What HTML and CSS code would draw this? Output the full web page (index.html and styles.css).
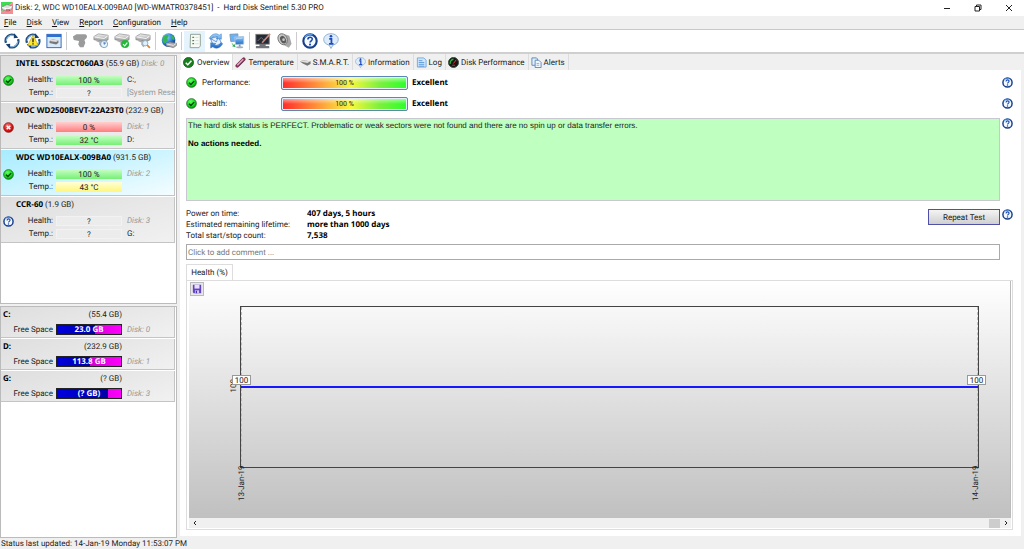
FILE: index.html
```html
<!DOCTYPE html>
<html lang="en">
<head>
    <meta charset="UTF-8">
    <meta name="viewport" content="width=device-width, initial-scale=1.0">
    <title>Hard Disk Sentinel</title>
    <link rel="stylesheet" href="styles.css">
</head>
<body>
    <!-- Shared icons -->
    <svg class="defs" aria-hidden="true">
        <defs>
            <radialGradient id="g-ok" cx=".4" cy=".3" r=".8"><stop offset="0" stop-color="#5dff5d"/><stop offset=".6" stop-color="#12d61c"/><stop offset="1" stop-color="#067a0c"/></radialGradient>
            <radialGradient id="g-bad" cx=".4" cy=".3" r=".8"><stop offset="0" stop-color="#ff7070"/><stop offset=".6" stop-color="#e81313"/><stop offset="1" stop-color="#8a0505"/></radialGradient>
            <linearGradient id="g-disk" x1="0" y1="0" x2="0" y2="1"><stop offset="0" stop-color="#f2f2f2"/><stop offset="1" stop-color="#8c8c8c"/></linearGradient>
            <linearGradient id="g-blue" x1="0" y1="0" x2="0" y2="1"><stop offset="0" stop-color="#9cd2ff"/><stop offset="1" stop-color="#1f66c4"/></linearGradient>
            <radialGradient id="g-globe" cx=".35" cy=".3" r=".8"><stop offset="0" stop-color="#8fdcff"/><stop offset=".6" stop-color="#2170cf"/><stop offset="1" stop-color="#0b2f7c"/></radialGradient>
        </defs>
        <symbol id="ok" viewBox="0 0 12 12">
            <circle cx="6" cy="6" r="5.3" fill="url(#g-ok)" stroke="#125c16" stroke-width=".8"/>
            <path d="M3.3 6.2l2 2 3.6-3.7" fill="none" stroke="#043a08" stroke-width="1.5"/>
        </symbol>
        <symbol id="bad" viewBox="0 0 12 12">
            <circle cx="6" cy="6" r="5.3" fill="url(#g-bad)" stroke="#7c1515" stroke-width=".8"/>
            <path d="M4 4l4 4M8 4l-4 4" stroke="#fff" stroke-width="1.5"/>
        </symbol>
        <symbol id="help" viewBox="0 0 12 12">
            <circle cx="6" cy="6" r="5" fill="#f5faff" stroke="#173f8c" stroke-width="1.6"/>
            <path d="M2 3.4A5 5 0 0 1 8 1.5" fill="none" stroke="#5c9be0" stroke-width="1"/>
            <path d="M4.4 4.9c0-2.4 3.5-2.2 3.3-.2C7.600 5.800 6 5.900 6 7.200" fill="none" stroke="#174ab0" stroke-width="1.2"/>
            <circle cx="6" cy="8.700" r=".8" fill="#174ab0"/>
        </symbol>
        <symbol id="refresh" viewBox="0 0 18 18">
            <path d="M2.200 11A7 7 0 0 1 12 2.600" fill="none" stroke="#24507f" stroke-width="2.600"/>
            <path d="M15.800 7A7 7 0 0 1 6 15.400" fill="none" stroke="#24507f" stroke-width="2.600"/>
            <path d="M2.500 9A6.500 6.500 0 0 1 11 2.800M15.500 9a6.500 6.500 0 0 1-8.500 6.200" fill="none" stroke="#8dbbe6" stroke-width="1.200"/>
            <path d="M11.500 .3l4.500 5-5 .7zM6.500 17.700L2 12.700l5-.7z" fill="#173f72"/>
        </symbol>
        <symbol id="drive" viewBox="0 0 18 18">
            <path d="M1 4l5-3 11 1.500v5l-4.500 2.500L1 7.500z" fill="url(#g-disk)" stroke="#808080" stroke-width=".7"/>
            <path d="M1.500 4.300l11 2L16.500 3.200" fill="none" stroke="#fff" stroke-width=".9"/>
            <path d="M4 8.500l4 1.500v3l2 2.500" fill="none" stroke="#aaa" stroke-width="1.800"/>
        </symbol>
        <symbol id="info" viewBox="0 0 18 18">
            <path d="M9 .8c4.600 0 8.200 2.800 8.200 6.500 0 3.200-2.600 5.600-6 6.300L9 17.400l-2.200-3.800C3.400 12.900.8 10.500.8 7.300.8 3.600 4.400.8 9 .8z" fill="#dcecfb" stroke="#86a8cf" stroke-width="1"/>
            <circle cx="9" cy="3.700" r="1.500" fill="#1d4bbf"/>
            <path d="M7 6.500h2.500v5.700M6.800 12.300h5" fill="none" stroke="#1d4bbf" stroke-width="2"/>
        </symbol>
    </svg>

    <header class="titlebar">
        <svg class="app-icon" viewBox="0 0 12 12"><path d="M0 0h12L0 10z" fill="#38e04f"/><path d="M12 0v12H0v-2z" fill="#f78c94"/><path d="M1 5l5-2.500 5 1.500v3L7 9.500 1 7.500z" fill="#ddd" stroke="#777" stroke-width=".6"/><path d="M1 5.500l6 1.500 4-2.500" fill="none" stroke="#fff"/><path d="M5 8h4" stroke="#c11" stroke-width="1"/></svg>
        <h1>Disk: 2, WDC WD10EALX-009BA0 [WD-WMATR0378451] &nbsp;-&nbsp; Hard Disk Sentinel 5.30 PRO</h1>
        <div class="window-buttons">
            <button aria-label="Minimize"><svg viewBox="0 0 8 8"><path d="M1 4.500h6"/></svg></button>
            <button aria-label="Restore"><svg viewBox="0 0 8 8"><path d="M1 2.500h4.500V7H1zM2.500 2.500V1H7v4.500H5.500"/></svg></button>
            <button aria-label="Close"><svg viewBox="0 0 8 8"><path d="M1 1l6 6M7 1L1 7"/></svg></button>
        </div>
    </header>

    <nav class="menu">
        <a href="#"><u>F</u>ile</a>
        <a href="#"><u>D</u>isk</a>
        <a href="#"><u>V</u>iew</a>
        <a href="#"><u>R</u>eport</a>
        <a href="#"><u>C</u>onfiguration</a>
        <a href="#"><u>H</u>elp</a>
    </nav>

    <div class="toolbar">
        <button aria-label="Refresh"><svg><use href="#refresh"/></svg></button>
        <button aria-label="Refresh problems"><svg viewBox="0 0 18 18"><use href="#refresh"/><path d="M9 2.500l6 11.500H3z" fill="#ffe72e" stroke="#b39a00" stroke-width=".7"/><path d="M9 6v4.500M9 11.500v1.500" stroke="#222" stroke-width="1.500"/></svg></button>
        <button aria-label="Disk panel"><svg viewBox="0 0 18 18"><rect x="1" y="1.500" width="16" height="15" fill="#d7e9fa" stroke="#2c5fae"/><path d="M1 3h16" stroke="#2f6fd0" stroke-width="3"/><path d="M4 9l3-2 7 1.300V11l-2.500 2L4 11.300z" fill="#777"/><path d="M4 9l3-2 7 1.300L11.500 10z" fill="#ddd"/></svg></button>
        <span class="sep"></span>
        <button aria-label="Disk menu"><svg viewBox="0 0 18 18"><path d="M1 4l4-2.500 10 0c2.500 1 2.500 4 0 5.500l-1 1 1 3-2 5H9l-2-3 1-4-6-1z" fill="#9b9b9b"/></svg></button>
        <button aria-label="Short self test"><svg viewBox="0 0 18 18"><use href="#drive"/><circle cx="12.500" cy="12.500" r="4" fill="#e9f4ff" stroke="#7a9cba"/><path d="M12.500 10v2.700l2-1.700" fill="none" stroke="#2464a8"/></svg></button>
        <button aria-label="Extended self test"><svg viewBox="0 0 18 18"><use href="#drive"/><circle cx="12.500" cy="12.500" r="4.500" fill="#21b937"/><path d="M10.200 12.600l1.800 1.800 3-3.500" fill="none" stroke="#fff" stroke-width="1.300"/></svg></button>
        <button aria-label="Surface test"><svg viewBox="0 0 18 18"><use href="#drive"/><circle cx="11.500" cy="11.500" r="3" fill="#dff1ff" stroke="#8fa9bd"/><path d="M13.700 13.700l3 3" stroke="#d38a32" stroke-width="2"/></svg></button>
        <span class="sep"></span>
        <button aria-label="Online"><svg viewBox="0 0 18 18"><circle cx="8.500" cy="8" r="7.700" fill="url(#g-globe)"/><path d="M3 4c3-3.500 7-2 5 .5s1 2.500-1 4.500-3 4-4.500 1.500S1.500 6 3 4zM11 2c3 1 5 4 4 6l-3-1z" fill="#37b556"/><path d="M6 12l4-2 7.500 1.500V14L14 16.500l-8-2z" fill="#aaa" stroke="#666" stroke-width=".6"/><path d="M6 12.200l8 1.800 3-2.300" fill="none" stroke="#eee"/></svg></button>
        <span class="sep"></span>
        <button class="pressed" aria-label="Text report"><svg viewBox="0 0 18 18"><path d="M4 1.500h11v13l-1.500 2H3.500z" fill="#f7faf5" stroke="#8b9c8c"/><path d="M6 5h2M6 8.500h2M6 12h2" stroke="#56845f" stroke-width="1.300"/><path d="M9.500 5H13M9.500 8.500H13M9.500 12H13" stroke="#d3dcd6"/></svg></button>
        <button aria-label="Send report"><svg viewBox="0 0 18 18"><path d="M2.500 6l9-2 4 8-9 3z" fill="#e6f2ff" stroke="#5b92d0"/><path d="M2.500 6l7 4 2-6" fill="none" stroke="#5b92d0"/><path d="M1.500 6c3-6 9-6 11-3.500l2.500-1.500v6l-6-1 2-1.500C8.500 3 5 3.500 4 7zM16.500 12c-3 6-9 6-11 3.500L3 17v-6l6 1-2 1.500c2.500 1.500 6 1 7-2.500z" fill="url(#g-blue)" stroke="#2468b5" stroke-width=".5"/></svg></button>
        <button aria-label="Network"><svg viewBox="0 0 18 18"><path d="M1 1.500l9-.5v8L2 9.500z" fill="#62b4ff" stroke="#7d95b2"/><path d="M6 4.500L16.500 4v8.500l-9 .5z" fill="url(#g-blue)" stroke="#a5bdd9"/><path d="M7.500 7c3-2.500 5 0 7.500-1.500" fill="none" stroke="#bfe4ff"/><path d="M12 13v2.500" stroke="#8497ab" stroke-width="2"/><ellipse cx="12" cy="16" rx="4" ry="1.200" fill="#9fb0c2"/><path d="M2.500 10.500l3 3 .5-1.500 1.500 4-4-1 1-1z" fill="#2faa55"/></svg></button>
        <span class="sep"></span>
        <button aria-label="Preferences"><svg viewBox="0 0 18 18"><rect x="1" y="1.500" width="15" height="11" fill="#242936" stroke="#777"/><path d="M1 16h15M5 13.500h7" stroke="#70737a" stroke-width="2.500"/><path d="M17 1L8 11" stroke="#c98d80" stroke-width="1.800"/><path d="M3 9l4-4 3 3" fill="none" stroke="#777"/></svg></button>
        <button aria-label="Sounds"><svg viewBox="0 0 18 18"><path d="M9 1l6 2 2.500 9-3 4.500-8-4z" fill="#a8a8a8"/><ellipse cx="7.500" cy="7" rx="5" ry="6.500" transform="rotate(-28 7.500 7)" fill="#c9c9c9" stroke="#777"/><ellipse cx="8" cy="7.500" rx="3" ry="4.500" transform="rotate(-28 8 7.500)" fill="#5b5b5b"/><circle cx="8.500" cy="7.500" r="1.500" fill="#c9c9c9"/></svg></button>
        <span class="sep"></span>
        <button aria-label="Help"><svg><use href="#help"/></svg></button>
        <button aria-label="About"><svg><use href="#info"/></svg></button>
    </div>

    <div class="main">
        <aside class="side">
            <section class="disk-list">
                <article class="disk">
                    <svg class="state"><use href="#ok"/></svg>
                    <h2><b>INTEL SSDSC2CT060A3</b> (55.9 GB) <i>Disk: 0</i></h2>
                    <div class="row"><span>Health:</span><div class="meter green">100 %</div><em class="letter">C:,</em></div>
                    <div class="row"><span>Temp.:</span><div class="meter">?</div><em class="volume">[System Rese</em></div>
                </article>
                <article class="disk">
                    <svg class="state"><use href="#bad"/></svg>
                    <h2><b>WDC WD2500BEVT-22A23T0</b> (232.9 GB)</h2>
                    <div class="row"><span>Health:</span><div class="meter red">0 %</div><i>Disk: 1</i></div>
                    <div class="row"><span>Temp.:</span><div class="meter green">32 °C</div><em class="letter">D:</em></div>
                </article>
                <article class="disk selected">
                    <svg class="state"><use href="#ok"/></svg>
                    <h2><b>WDC WD10EALX-009BA0</b> (931.5 GB)</h2>
                    <div class="row"><span>Health:</span><div class="meter green">100 %</div><i>Disk: 2</i></div>
                    <div class="row"><span>Temp.:</span><div class="meter yellow">43 °C</div></div>
                </article>
                <article class="disk">
                    <svg class="state"><use href="#help"/></svg>
                    <h2><b>CCR-60</b> (1.9 GB)</h2>
                    <div class="row"><span>Health:</span><div class="meter">?</div><i>Disk: 3</i></div>
                    <div class="row"><span>Temp.:</span><div class="meter">?</div><em class="letter">G:</em></div>
                </article>
            </section>

            <section class="drive-list">
                <article class="drive">
                    <h2><b>C:</b><span>(55.4 GB)</span></h2>
                    <div class="row"><span>Free Space</span><div class="space"><div class="used" style="width: 59%"></div><b>23.0 GB</b></div><i>Disk: 0</i></div>
                </article>
                <article class="drive">
                    <h2><b>D:</b><span>(232.9 GB)</span></h2>
                    <div class="row"><span>Free Space</span><div class="space"><div class="used" style="width: 51%"></div><b>113.8 GB</b></div><i>Disk: 1</i></div>
                </article>
                <article class="drive">
                    <h2><b>G:</b><span>(? GB)</span></h2>
                    <div class="row"><span>Free Space</span><div class="space"><div class="used" style="width: 80%"></div><b>(? GB)</b></div><i>Disk: 3</i></div>
                </article>
            </section>
        </aside>

        <main class="content">
            <nav class="tabs">
                <button class="active"><svg viewBox="0 0 12 12"><circle cx="6" cy="6" r="5.500" fill="#16801e" stroke="#0c4a12" stroke-width=".8"/><path d="M3 6.200l2.200 2.200 4-4.300" fill="none" stroke="#fff" stroke-width="1.700"/></svg>Overview</button>
                <button><svg viewBox="0 0 12 12"><path d="M9.500 2.500l-7 7" stroke="#813657" stroke-width="4" stroke-linecap="round"/><path d="M9 2.500L2.500 9" stroke="#e9a9c6" stroke-width="1.500"/><path d="M10 4l-6 6" stroke="#573c56" stroke-width=".8"/></svg>Temperature</button>
                <button><svg viewBox="0 0 12 12"><path d="M0 5l3-1.500 8.500 1v3L8 9.500 3 7z" fill="#777"/><path d="M0 5l3-1.500 8.500 1L8 6.500z" fill="#ddd"/></svg>S.M.A.R.T.</button>
                <button><svg><use href="#info"/></svg>Information</button>
                <button><svg viewBox="0 0 12 12"><path d="M1.500 1h7L11 3.500V11H1.500z" fill="#cfe5fb" stroke="#6ea8e2"/><path d="M3 4h4M3 6h6M3 8h6M3 10h6" stroke="#4286cd" stroke-width=".8"/></svg>Log</button>
                <button><svg viewBox="0 0 12 12"><circle cx="6" cy="6" r="5.500" fill="#161616" stroke="#3c483c"/><path d="M2.500 7.500A4 4 0 0 1 6 2.500" fill="none" stroke="#29b43a" stroke-width="1.500"/><path d="M6 7l3-4" stroke="#f33"/><path d="M4.500 9h3" stroke="#d33"/></svg>Disk Performance</button>
                <button><svg viewBox="0 0 12 12"><path d="M1 1h5l1 1v7H1z" fill="#e4effb" stroke="#5a83b8"/><path d="M4.500 3.500h4L11 6v5.500H4.500z" fill="#f4f9ff" stroke="#5a83b8"/><path d="M6 7h3M6 9h3" stroke="#8aa9d2"/></svg>Alerts</button>
            </nav>

            <div class="overview">
                <div class="rating">
                    <svg class="state"><use href="#ok"/></svg>
                    <span>Performance:</span>
                    <div class="rainbow">100 %</div>
                    <b>Excellent</b>
                    <button class="help" aria-label="Help"><svg><use href="#help"/></svg></button>
                </div>
                <div class="rating">
                    <svg class="state"><use href="#ok"/></svg>
                    <span>Health:</span>
                    <div class="rainbow">100 %</div>
                    <b>Excellent</b>
                    <button class="help" aria-label="Help"><svg><use href="#help"/></svg></button>
                </div>

                <div class="line status">
                    <div class="message">
                        <p>The hard disk status is PERFECT. Problematic or weak sectors were not found and there are no spin up or data transfer errors.</p>
                        <p><b>No actions needed.</b></p>
                    </div>
                    <button class="help" aria-label="Help"><svg><use href="#help"/></svg></button>
                </div>

                <div class="line summary">
                    <dl>
                        <dt>Power on time:</dt><dd>407 days, 5 hours</dd>
                        <dt>Estimated remaining lifetime:</dt><dd>more than 1000 days</dd>
                        <dt>Total start/stop count:</dt><dd>7,538</dd>
                    </dl>
                    <button class="repeat">Repeat Test</button>
                    <button class="help" aria-label="Help"><svg><use href="#help"/></svg></button>
                </div>

                <input class="comment" type="text" placeholder="Click to add comment ..." aria-label="Comment">

                <button class="chart-tab">Health (%)</button>
                <div class="chart-panel">
                    <div class="chart">
                        <button class="save" aria-label="Save"><svg viewBox="0 0 12 12"><path d="M1 1h10v10H2L1 10z" fill="#6442c4"/><path d="M3 1h6v4.500H3z" fill="#e6e0fa"/><path d="M3.500 7.500h5V11h-5z" fill="#cfc4f2"/><path d="M4.500 8h1.500v3H4.500z" fill="#4e2fae"/></svg></button>
                        <div class="plot">
                            <span class="axis-y">100</span>
                            <div class="series"></div>
                            <span class="point first">100</span>
                            <span class="point last">100</span>
                        </div>
                        <div class="axis-x"><span>13-Jan-19</span><span>14-Jan-19</span></div>
                    </div>
                    <div class="scroll">
                        <button aria-label="Scroll left"><svg viewBox="0 0 6 6"><path d="M4 1L2 3l2 2"/></svg></button>
                        <div class="thumb"></div>
                        <button aria-label="Scroll right"><svg viewBox="0 0 6 6"><path d="M2 1l2 2-2 2"/></svg></button>
                    </div>
                </div>
            </div>
        </main>
    </div>

    <footer class="statusbar">Status last updated: 14-Jan-19 Monday 11:53:07 PM</footer>
</body>
</html>
```
FILE: styles.css
```css
* {
    box-sizing: border-box;
}

body {
    display: flex;
    flex-direction: column;
    height: 100vh;
    margin: 0;
    background-color: #f0f0f0;
    font-family: Roboto, "Open Sans", sans-serif;
    font-size: 8px;
    line-height: 12px;
    text-rendering: geometricPrecision;
    color: #222;
}

h1, h2, p, dl, dd {
    margin: 0;
    font-size: inherit;
    font-weight: normal;
}

button {
    padding: 0;
    border: none;
    background: none;
    font: inherit;
    color: inherit;
    text-rendering: inherit;
}

svg {
    display: block;
    flex: none;
}

b, dd {
    font-family: "Noto Sans", "Open Sans", sans-serif;
    font-weight: bold;
    color: #000;
}

i {
    color: #999;
}

.defs {
    position: absolute;
    width: 0;
    height: 0;
}

/* Window frame */
.titlebar {
    display: flex;
    align-items: center;
    height: 16px;
    padding-left: 1px;
    gap: 2px;
    background-color: #fff;
}

.app-icon {
    width: 12px;
    height: 12px;
}

.window-buttons {
    display: flex;
    margin-left: auto;
}

.window-buttons button {
    display: flex;
    justify-content: center;
    width: 31px;
}

.window-buttons svg {
    width: 8px;
    height: 8px;
    fill: none;
    stroke: #222;
    stroke-width: 1;
}

.menu {
    display: flex;
    align-items: center;
    gap: 10px;
    height: 14px;
    padding-left: 4px;
    border-bottom: 1px solid #c8c8c8;
}

.menu a {
    color: #111;
    text-decoration: none;
}

.toolbar {
    display: flex;
    align-items: center;
    height: 24px;
    padding-left: 1px;
    background-color: #fff;
    border-bottom: 2px solid #cfcfcf;
}

.toolbar button {
    display: flex;
    align-items: center;
    justify-content: center;
    width: 21px;
    height: 21px;
}

.toolbar svg {
    width: 16px;
    height: 16px;
}

.toolbar .pressed {
    background-color: #e5f3fd;
}

.sep {
    width: 1px;
    height: 18px;
    margin: 0 2px;
    background-color: #ccc;
}

.main {
    display: flex;
    flex: 1;
    min-height: 0;
    gap: 3px;
}

/* Left panel */
.side {
    display: flex;
    flex-direction: column;
    gap: 2px;
    width: 177px;
    padding-top: 1px;
}

.disk-list, .drive-list {
    border: 1px solid #bbb;
    background-color: #fff;
}

.disk-list {
    height: 249px;
}

.drive-list {
    flex: 1;
}

.disk, .drive {
    position: relative;
    margin-right: 1px;
    border-right: 1px solid #c4c4c4;
    border-bottom: 1px solid #c4c4c4;
    background-image: linear-gradient(165deg, #dedede, #f1f1f1);
}

.disk {
    height: 46px;
    margin-bottom: 1px;
    padding-top: 2px;
}

.disk.selected {
    background-image: linear-gradient(165deg, #a6ecff, #f4fdff);
}

.disk h2 {
    padding-left: 15px;
    margin-bottom: 3px;
    white-space: nowrap;
}

.state {
    width: 11px;
    height: 11px;
}

.disk .state {
    position: absolute;
    left: 2px;
    top: 19px;
}

.row {
    display: grid;
    grid-template-columns: 52px 66px 1fr;
    column-gap: 3px;
    align-items: center;
    height: 13px;
    line-height: 13px;
    white-space: nowrap;
}

.row > span {
    text-align: right;
}

.row i, .row em {
    padding-left: 2px;
}

.row em {
    font-style: normal;
}

.row .volume {
    color: #999;
}

.meter {
    height: 10px;
    border: 1px solid #f2f2f2;
    background-color: #ececec;
    line-height: 9px;
    text-align: center;
}

.meter.green {
    border: none;
    background: linear-gradient(#ccffc8, #76f076);
    line-height: 11px;
}

.meter.red {
    border: none;
    background: linear-gradient(#ffd0d0, #ff7c7c);
    line-height: 11px;
}

.meter.yellow {
    border: none;
    background: linear-gradient(#ffffd8, #fff67a);
    line-height: 11px;
}

.drive {
    height: 31px;
    margin-bottom: 1px;
    padding-top: 2px;
}

.drive h2 {
    display: flex;
    justify-content: space-between;
    width: 121px;
    padding-left: 2px;
    margin-bottom: 2px;
}

.space {
    position: relative;
    height: 11px;
    border: 1px solid #222;
    background: linear-gradient(90deg, #a000a0, #f0f);
    line-height: 10px;
    text-align: center;
}

.space .used {
    height: 100%;
    background: linear-gradient(90deg, #0000e0, #0000a8);
}

.space b {
    position: absolute;
    inset: 0;
    color: #fff;
}

/* Tabs */
.content {
    display: flex;
    flex: 1;
    flex-direction: column;
    min-width: 0;
    padding: 0 3px 2px 0;
}

.tabs {
    display: flex;
    height: 16px;
    padding-left: 1px;
}

.tabs button {
    display: flex;
    align-items: center;
    gap: 2px;
    padding: 1px 3px 0 2px;
    border-right: 1px solid #ddd;
}

.tabs svg {
    width: 11px;
    height: 11px;
}

.tabs .active {
    gap: 3px;
    background-color: #fff;
}

.overview {
    display: flex;
    flex: 1;
    flex-direction: column;
    min-height: 0;
    padding: 2px 8px 6px 6px;
    background-color: #fff;
}

.rating {
    display: grid;
    grid-template-columns: 12px 75px 127px 1fr 11px;
    column-gap: 4px;
    align-items: center;
    height: 21px;
}

.help svg {
    width: 11px;
    height: 11px;
}

.rainbow {
    height: 14px;
    border: 1px solid #5d86b5;
    border-radius: 2px;
    background: linear-gradient(rgba(255, 255, 255, .6), rgba(255, 255, 255, 0) 50%), linear-gradient(90deg, #ff2a2a, #ff9a3c 30%, #f8f83c 55%, #7df03c 78%, #2aff2a);
    box-shadow: inset 0 0 0 1px #e4eefa;
    font-size: 7px;
    line-height: 12px;
    text-align: center;
}

.line {
    display: flex;
    align-items: flex-start;
    gap: 2px;
}

.status {
    margin-top: 4px;
}

.message {
    flex: 1;
    height: 83px;
    padding: 1px;
    border: 1px solid #c8c8d0;
    background-color: #bfffbf;
}

.message, .message b {
    font-family: "Liberation Sans", Arial, sans-serif;
}

.message p + p {
    margin-top: 6px;
}

.summary {
    height: 43px;
    padding-top: 7px;
}

.summary button {
    margin-top: 1px;
}

.summary dl {
    display: grid;
    flex: 1;
    grid-template-columns: 121px 1fr;
    line-height: 11px;
}

.repeat {
    width: 72px;
    height: 16px;
    padding-top: 1px;
    border: 1px solid #5050a8;
    background: linear-gradient(#f4f4f4, #cfcfcf);
}

.comment {
    height: 16px;
    margin-right: 13px;
    padding: 0 1px;
    border: 1px solid #aaa;
    font: inherit;
    text-rendering: inherit;
}

.comment::placeholder {
    color: #777;
}

/* Health chart */
.chart-tab {
    align-self: flex-start;
    width: 47px;
    height: 16px;
    margin-top: 4px;
    border: 1px solid #ddd;
    border-bottom: none;
}

.chart-panel {
    display: flex;
    flex: 1;
    flex-direction: column;
    padding: 0 1px 1px 2px;
    border: 1px solid #ddd;
}

.chart {
    display: flex;
    flex: 1;
    flex-direction: column;
    border-right: 1px solid #bbb;
    background: linear-gradient(#fff, #c0c0c0);
}

.save {
    width: 14px;
    height: 14px;
    margin: 1px;
    padding: 1px;
    border: 1px solid #bbb;
    background-color: #e8e8e8;
}

.plot {
    position: relative;
    flex: 1;
    margin: 9px 31px 0 51px;
    border: 1px solid #444;
}

.plot::before {
    content: "";
    position: absolute;
    inset: 0;
    border: dashed #bbb;
    border-width: 0 1px;
}

.series {
    position: absolute;
    left: 0;
    right: 0;
    top: 50%;
    margin-top: -1px;
    border-top: 2px solid #1818ff;
}

.point {
    position: absolute;
    top: 50%;
    width: 19px;
    height: 10px;
    margin-top: -12px;
    border: 1px solid #999;
    background-color: #fff;
    line-height: 9px;
    text-align: center;
}

.first {
    left: -9px;
}

.last {
    right: -8px;
}

.axis-y, .axis-x {
    line-height: 8px;
    white-space: nowrap;
}

.axis-y {
    position: absolute;
    left: -11px;
    top: 50%;
    margin-top: -8px;
    writing-mode: vertical-rl;
    transform: rotate(180deg);
}

.axis-x {
    display: flex;
    justify-content: space-between;
    height: 50px;
    padding: 1px 30px 0 49px;
}

.axis-x span {
    height: 32px;
    writing-mode: vertical-rl;
    transform: rotate(180deg);
    text-align: right;
}

.scroll {
    display: flex;
    align-items: center;
    height: 10px;
    background-color: #f0f0f0;
}

.scroll button {
    display: flex;
    justify-content: center;
    width: 11px;
}

.scroll svg {
    width: 6px;
    height: 6px;
    fill: none;
    stroke: #222;
    stroke-width: 1;
}

.thumb {
    width: 11px;
    height: 9px;
    margin-left: auto;
    background-color: #cdcdcd;
}

.statusbar {
    height: 11px;
    padding-left: 1px;
    line-height: 12px;
}
```
